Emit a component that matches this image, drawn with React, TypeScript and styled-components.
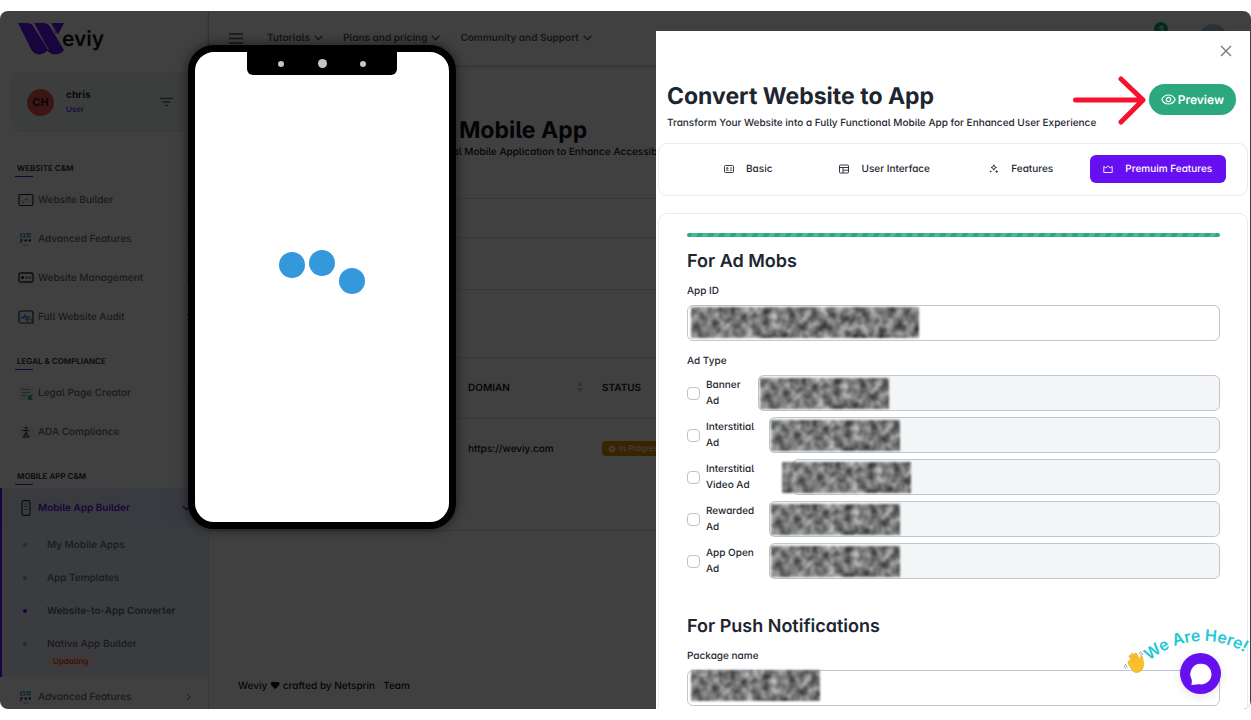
import React from "react";
import styled, { createGlobalStyle, css } from "styled-components";

const GlobalStyle = createGlobalStyle`
  *, *::before, *::after { box-sizing: border-box; }
  body {
    margin: 0;
    background: #fff;
    color: #1d2630;
    font-family: Inter, "Liberation Sans", sans-serif;
    font-size: 10px;
    line-height: 16px;
    font-weight: 500;
    font-feature-settings: "cv11", "cv05";
    text-rendering: geometricPrecision;
  }
  button, input { font: inherit; font-feature-settings: inherit; text-rendering: inherit; }
  h1, h2, h3, p, ul { margin: 0; padding: 0; }
  ul { list-style: none; }
  a { color: inherit; text-decoration: none; }
`;

const Frame = styled.div`
  position: relative;
  height: calc(100vh - 22px);
  margin: 11px 0;
  border-radius: 8px;
  overflow: hidden;
`;

/* ---------- Dashboard behind the overlay ---------- */

const Shell = styled.div`
  display: flex;
  height: 100%;
`;

const Sidebar = styled.nav`
  flex: none;
  width: 209px;
  border-right: 1px dotted #b9c2ca;
  overflow: hidden;
`;

const Brand = styled.a`
  display: flex;
  align-items: flex-start;
  height: 61px;
  padding: 12px 0 0 18px;
  color: #10101c;
  font-size: 21px;
  font-weight: 600;
  line-height: 34px;
  svg { margin-right: -3px; }
`;

const UserCard = styled.div`
  display: flex;
  align-items: center;
  height: 60px;
  margin: 0 12px;
  padding: 0 22px 0 14px;
  border: 1px solid #e4eceb;
  border-radius: 8px;
  background: #f0f6f4;
`;

const Initials = styled.span`
  width: 27px;
  height: 27px;
  margin-right: 12px;
  border-radius: 50%;
  background: #f0574f;
  color: #10101c;
  font-size: 11px;
  font-weight: 600;
  line-height: 27px;
  text-align: center;
`;

const UserText = styled.div`
  flex: 1;
  line-height: 14px;
  font-weight: 700;
`;

const Role = styled.div`
  color: #6610f2;
  font-size: 8px;
  font-weight: 500;
`;

const SectionLabel = styled.h3`
  position: relative;
  height: 17px;
  margin: 17px 0 3px;
  padding-left: 17px;
  color: #1d2630;
  font-size: 8px;
  font-weight: 600;
  line-height: 16px;
  text-transform: uppercase;
  &::after {
    content: "";
    position: absolute;
    left: 15px;
    bottom: 0;
    width: 18px;
    height: 1px;
    background: #6610f2;
  }
  ${UserCard} + & { margin-top: 28px; }
`;

const NavLink = styled.a<{ $active?: boolean }>`
  display: flex;
  align-items: center;
  gap: 4px;
  height: 39px;
  padding: 0 17px 0 18px;
  color: #5b6b79;
  ${(p) =>
    p.$active &&
    css`
      color: #6610f2;
      font-weight: 600;
      background: linear-gradient(90deg, #e9ecf8, #dbe8fa);
    `}
`;

const NavText = styled.span`
  flex: 1;
`;

const NavGroup = styled.div`
  border-left: 2px solid #6610f2;
  background: #eceffa;
  ${NavLink} { padding-left: 16px; }
`;

const SubList = styled.ul`
  padding: 1px 0 3px;
`;

const SubItem = styled.li<{ $current?: boolean }>`
  display: grid;
  grid-template-columns: 24px 1fr;
  padding: 7px 0 6px 21px;
  color: #5b6b79;
  line-height: 20px;
  font-weight: ${(p) => (p.$current ? 600 : 500)};
  &::before {
    content: "";
    width: 4px;
    height: 4px;
    margin-top: 8px;
    border-radius: 50%;
    background: ${(p) => (p.$current ? "#6610f2" : "#9aa5af")};
  }
`;

const Updating = styled.span`
  grid-column: 2;
  justify-self: start;
  padding: 0 6px;
  border-radius: 8px;
  background: #fbe3e0;
  color: #dc2626;
  font-size: 8px;
  font-weight: 500;
  line-height: 14px;
`;

const Main = styled.main`
  flex: 1;
  min-width: 0;
  display: flex;
  flex-direction: column;
`;

const TopBar = styled.header`
  display: flex;
  align-items: center;
  height: 54px;
  padding: 0 20px;
  box-shadow: 0 1px 4px rgba(0, 0, 0, 0.25);
  color: #4b5a67;
  font-weight: 600;
`;

const TopLinks = styled.div`
  display: flex;
  gap: 20px;
  margin-left: 24px;
  flex: 1;
`;

const TopLink = styled.a`
  display: flex;
  align-items: center;
  gap: 4px;
`;

const Alerts = styled.span`
  align-self: flex-start;
  width: 14px;
  height: 14px;
  margin-top: 11px;
  border-radius: 50%;
  background: #12a56f;
  color: #fff;
  font-size: 8px;
  line-height: 14px;
  text-align: center;
`;

const Avatar = styled.span`
  width: 28px;
  height: 28px;
  margin-left: 31px;
  margin-right: 4px;
  border-radius: 50%;
  background: #a9c8de;
`;

const Hero = styled.section`
  padding: 51px 29px 38px;
  border-bottom: 1px solid #dbe0e5;
  white-space: nowrap;
  overflow: hidden;
  color: #10101c;
`;

const PageTitle = styled.h1`
  font-size: 23px;
  line-height: 28px;
  font-weight: 700;
`;

const Band = styled.div<{ $height: number }>`
  height: ${(p) => p.$height}px;
  border-bottom: 1px solid #dbe0e5;
`;

const AppsTable = styled.table`
  width: 100%;
  table-layout: fixed;
  border-collapse: collapse;
  text-align: left;
  color: #10101c;
  th {
    height: 60px;
    padding: 0;
    border-bottom: 1px solid #dbe0e5;
    font-weight: 600;
  }
  td { height: 62px; padding: 0; }
`;

const HeadCell = styled.div`
  display: flex;
  justify-content: space-between;
  padding-right: 19px;
`;

const StatusBadge = styled.span`
  display: inline-flex;
  align-items: center;
  gap: 3px;
  padding: 0 6px;
  border-radius: 4px;
  background: #e58a00;
  color: #fff;
  font-size: 8px;
  font-weight: 500;
  line-height: 15px;
`;

const Footer = styled.footer`
  display: flex;
  gap: 8px;
  margin-top: auto;
  padding: 0 29px 15px;
  color: #10101c;
`;

const Dim = styled.div`
  position: absolute;
  inset: 0;
  background: rgba(0, 0, 0, 0.75);
`;

/* ---------- Phone preview ---------- */

const Phone = styled.section`
  position: absolute;
  top: 34px;
  left: 188px;
  width: 268px;
  height: 484px;
  border: 7px solid #000;
  border-radius: 26px;
  background: #fff;
  box-shadow: 0 0 12px rgba(0, 0, 0, 0.6);
`;

const Notch = styled.div`
  display: flex;
  align-items: center;
  justify-content: space-between;
  width: 150px;
  height: 23px;
  margin: 0 auto;
  padding: 0 31px;
  border-radius: 0 0 6px 6px;
  background: #000;
`;

const Lens = styled.i<{ $size: number }>`
  width: ${(p) => p.$size}px;
  height: ${(p) => p.$size}px;
  border-radius: 50%;
  background: #c8c4c4;
`;

const Loader = styled.div`
  display: flex;
  justify-content: center;
  gap: 4px;
  margin-top: 174px;
`;

const Ball = styled.i<{ $drop: number }>`
  width: 26px;
  height: 26px;
  margin-top: ${(p) => p.$drop}px;
  border-radius: 50%;
  background: #3498db;
`;

/* ---------- Drawer ---------- */

const Drawer = styled.aside`
  position: absolute;
  top: 20px;
  right: 1px;
  bottom: 0;
  width: 594px;
  display: flex;
  flex-direction: column;
  overflow: hidden;
  background: #fff;
`;

const CloseButton = styled.button`
  flex: none;
  align-self: flex-end;
  display: grid;
  place-items: center;
  width: 24px;
  height: 24px;
  margin: 8px 12px 17px;
  padding: 0;
  border: 0;
  background: none;
  color: #6f7478;
`;

const DrawerHead = styled.header`
  flex: none;
  display: flex;
  justify-content: space-between;
  align-items: flex-start;
  padding: 0 14px 12px 11px;
`;

const DrawerTitle = styled.h2`
  margin-bottom: 3px;
  font-size: 23px;
  line-height: 32px;
  font-weight: 700;
`;

const PreviewButton = styled.button`
  display: flex;
  align-items: center;
  gap: 2px;
  height: 31px;
  margin-top: 4px;
  padding: 0 12px;
  border: 0;
  border-radius: 16px;
  background: #2ca87f;
  color: #fff;
  font-size: 12px;
  font-weight: 600;
`;

const Card = styled.section`
  margin: 0 2px;
  border: 1px solid #e7eaee;
  border-radius: 9px;
`;

const Tabs = styled(Card)`
  display: flex;
  flex: none;
  margin-bottom: 17px;
  padding: 11px 21px 12px;
`;

const Tab = styled.button<{ $active?: boolean }>`
  flex: 1;
  display: flex;
  align-items: center;
  justify-content: center;
  gap: 12px;
  height: 28px;
  padding: 0;
  border: 0;
  border-radius: 6px;
  background: ${(p) => (p.$active ? "#6610f2" : "none")};
  color: ${(p) => (p.$active ? "#fff" : "#1d2630")};
  white-space: nowrap;
`;

const FormCard = styled(Card)`
  flex: none;
  padding: 19px 27px 28px 28px;
`;

const Progress = styled.div`
  height: 4px;
  border-radius: 2px;
  background: repeating-linear-gradient(115deg, #2ca87f 0 5px, #4fb795 5px 10px);
`;

const GroupTitle = styled.h3<{ $spaced?: boolean }>`
  margin-top: ${(p) => (p.$spaced ? 36 : 13)}px;
  margin-bottom: 9px;
  font-size: 18px;
  line-height: 24px;
  font-weight: 600;
`;

const FieldLabel = styled.label`
  display: block;
  margin-bottom: 6px;
`;

const AdTypeLabel = styled.p`
  margin: 12px 0 6px;
`;

const Field = styled.div`
  position: relative;
  flex: 1;
  min-width: 0;
  svg {
    position: absolute;
    top: 0;
    left: 0;
    overflow: visible;
    pointer-events: none;
  }
`;

const TextInput = styled.input`
  display: block;
  width: 100%;
  height: 36px;
  padding: 0 12px;
  border: 1px solid #bec8d0;
  border-radius: 6px;
  background: #fff;
  &:disabled { background: #f3f5f7; }
`;

const AdRows = styled.div`
  display: grid;
  gap: 6px;
`;

const AdRow = styled.div`
  display: flex;
  align-items: center;
`;

const CheckBox = styled.input`
  appearance: none;
  width: 13px;
  height: 13px;
  margin: 0 6px 0 0;
  border: 1px solid #bfc3c7;
  border-radius: 4px;
  background: #fff;
`;

const AdLabel = styled.label<{ $width: number }>`
  width: ${(p) => p.$width}px;
`;

const LabelText = styled.span`
  display: block;
  width: 49px;
`;

/* ---------- Floating pieces ---------- */

const Arrow = styled.svg`
  position: absolute;
  top: 64px;
  right: 104px;
`;

const ChatWidget = styled.div`
  position: absolute;
  right: 0;
  bottom: 12px;
  width: 130px;
  height: 64px;
`;

const Greeting = styled.svg`
  position: absolute;
  inset: 0;
  overflow: visible;
`;

const ChatButton = styled.button`
  position: absolute;
  right: 30px;
  bottom: 3px;
  display: grid;
  place-items: center;
  width: 41px;
  height: 41px;
  padding: 0;
  border: 0;
  border-radius: 50%;
  background: #6610f2;
  box-shadow: 0 2px 10px rgba(0, 0, 0, 0.12);
`;

/* ---------- Icons ---------- */

const Chevron = () => (
  <svg width="9" height="6" viewBox="0 0 9 6" fill="none" stroke="currentColor" strokeWidth="1.3">
    <path d="M0.7 0.8 4.5 4.8 8.3 0.8" />
  </svg>
);

const ChevronRight = () => (
  <svg width="5" height="8" viewBox="0 0 5 8" fill="none" stroke="currentColor" strokeWidth="1">
    <path d="M1 1 4 4 1 7" />
  </svg>
);

const Logo = () => (
  <svg width="47" height="32" viewBox="0 0 47 32" fill="#6610f2">
    <path d="M0 0H8C13 0 15 2 17 6L30 27C25 33 16 33 13 26Z" />
    <path d="M16 0H25C30 0 32 3 34 7L46 27C41 34 31 32 28 25Z" />
    <path d="M33 0H46L41 9.500C40 11.500 38 11.500 37 9.500Z" />
    <path d="M15 -1 30.500 27M32 -1 41 14" stroke="#fff" strokeWidth="0.900" fill="none" />
  </svg>
);

type GlyphName = "chart" | "grid" | "manage" | "audit" | "doc" | "person" | "phone";

const glyphs: Record<GlyphName, React.ReactNode> = {
  chart: (
    <>
      <rect x="1" y="2.500" width="14" height="11" rx="1.500" fill="none" stroke="#222b35" strokeWidth="1.2" />
      <path d="M3 8l2 1.500L7 7l3 1 3 3" fill="none" stroke="#2ca87f" strokeDasharray="1 1" />
      <path d="M5 10v1.500" stroke="#dc2626" />
      <circle cx="9" cy="7" r="0.7" fill="#3b82f6" />
    </>
  ),
  grid: (
    <>
      <rect x="2.500" y="3" width="4" height="3" fill="none" stroke="#3b82f6" />
      <path d="M8 3h5M8 5.500h5" stroke="#2ca87f" strokeWidth="1.5" />
      <path d="M2 9h3M2 11h2" stroke="#dc2626" strokeWidth="1.3" />
      <path d="M6.500 9.500h2.500M10.500 9.500h2.500" stroke="#222b35" strokeWidth="2" />
      <path d="M5 14h6" stroke="#9aa5af" />
    </>
  ),
  manage: (
    <>
      <rect x="1" y="3" width="14" height="9" rx="1.500" fill="none" stroke="#222b35" strokeWidth="1.300" />
      <circle cx="4.500" cy="7.500" r="1.500" fill="#111" />
      <path d="M7 7.500h3" stroke="#3b82f6" strokeWidth="2" />
      <path d="M10.500 7.500h3" stroke="#2ca87f" strokeWidth="2" />
      <path d="M2 12.500h3" stroke="#dc6a26" strokeWidth="1.500" />
    </>
  ),
  audit: (
    <>
      <rect x="1" y="2" width="14" height="12" rx="1.500" fill="none" stroke="#222b35" strokeWidth="1.200" />
      <path d="M3 8.500h2.500L7 6l1.500 5L10 8h2" fill="none" stroke="#3b72f6" strokeWidth="1.300" />
      <circle cx="12" cy="12" r="2" fill="#fff" stroke="#2ca87f" />
      <path d="M13.500 13.500 15.500 15.500" stroke="#2ca87f" />
    </>
  ),
  doc: (
    <>
      <rect x="1" y="1" width="14" height="14" rx="3" fill="#eaf4ef" />
      <path d="M4 4.500h8M4 7.500h8M4 10.500h5" stroke="#8fa39a" />
      <path d="M14 10l-3 3.500M11 10.500v3.500h3.500" fill="none" stroke="#12a56f" strokeWidth="1.500" />
    </>
  ),
  person: (
    <>
      <circle cx="8" cy="8" r="7.500" fill="#eef2f4" />
      <circle cx="8" cy="4" r="1.300" fill="#2f6f60" />
      <path d="M4.500 6.500h7M8 6v4M8 9l-2.500 4h5L8 9z" fill="none" stroke="#333f4a" strokeWidth="1.200" />
    </>
  ),
  phone: (
    <>
      <rect x="4" y="0.700" width="8" height="14.600" rx="1.500" fill="none" stroke="#222b35" strokeWidth="1.200" />
      <path d="M6 4h4M6 6.500h4" stroke="#6f8ff2" />
      <path d="M6 9.500h4" stroke="#e06a6a" />
    </>
  ),
};

const Glyph = ({ name }: { name: GlyphName }) => (
  <svg width="16" height="16" viewBox="0 0 16 16">{glyphs[name]}</svg>
);

const tabIcons: Record<string, React.ReactNode> = {
  Basic: (
    <>
      <rect x="0.500" y="1.500" width="9" height="7" rx="1" />
      <path d="M2 6.800c.5-1 2.200-1 2.700 0M6 4h2M6 6.200h2" />
      <circle cx="3.300" cy="4.300" r="0.800" />
    </>
  ),
  "User Interface": (
    <>
      <rect x="0.500" y="1" width="9" height="8" rx="1" />
      <path d="M0.500 3.500h9M4 3.500V9M4 6.200h5.500" />
    </>
  ),
  Features: (
    <>
      <path d="M4.800 0.800 5.600 2.700 7.500 3.500 5.600 4.300 4.800 6.200 4 4.300 2.100 3.500 4 2.700z" />
      <path d="M1.600 6.700v1.600M0.800 7.500h1.600M7.700 6.400v2.400M6.500 7.600h2.400" />
    </>
  ),
  "Premuim Features": <path d="M0.800 2.500 2.800 4 5 1.800 7.200 4 9.200 2.500V8.500H0.800z" />,
};

const TabIcon = ({ name }: { name: string }) => (
  <svg width="10" height="10" viewBox="0 0 10 10" fill="none" stroke="currentColor" strokeWidth="0.900" strokeLinejoin="round">
    {tabIcons[name]}
  </svg>
);

const Wave = () => (
  <g transform="translate(3 18)">
    <g fill="#fbbf2d" stroke="#e59b16" strokeWidth="0.500">
      <path d="M5 9.500c1-1 2-.4 2.600.3l1 1L5.200 6c-.9-1.400.9-2.600 1.900-1.300l3 4.200-2.700-5C6.600 2.400 8.600 1.400 9.500 2.800l3 4.800-1.700-4c-.6-1.500 1.200-2.300 2-.9l3.400 6.600c.3-1.200-.1-2.300.2-3.400.4-1.300 2.100-1 2.200.3.300 2.900 1.800 6 .7 9.500-1 3.600-3.500 6-6.800 5.900-3.300 0-5-3.300-8.200-8.600-.6-1-.8-2.600.7-3.500z" />
    </g>
    <path d="M15 2c1.200.6 2 1.400 2.300 2.600M16 .5c1.600.8 2.500 2 2.900 3.500M1.500 13c.2 1.500.9 2.600 2 3.500M.2 14.500c.2 1.500.8 2.500 1.800 3.300" fill="none" stroke="#8d9095" strokeWidth="0.900" />
  </g>
);

const Redaction = ({ width, x, y }: { width: number; x: number; y: number }) => (
  <svg width={width} height="31" aria-hidden="true">
    <rect x={x} y={y} width={width} height="31" filter="url(#scramble)" />
  </svg>
);

const FilterDefs = styled.svg`
  position: absolute;
`;

const ScrambleFilter = () => (
  <FilterDefs width="0" height="0">
    <filter id="scramble" x="-3%" y="-10%" width="106%" height="120%" colorInterpolationFilters="sRGB">
      <feTurbulence type="fractalNoise" baseFrequency="0.12 0.11" numOctaves="2" seed="7" />
      <feColorMatrix values="0.900 0 0 0 0.020  0.900 0 0 0 0.020  0.900 0 0 0 0.020  0 0 0 0 1" />
      <feComposite operator="in" in2="SourceAlpha" />
      <feGaussianBlur stdDeviation="1" />
    </filter>
  </FilterDefs>
);

/* ---------- Data ---------- */

const websiteLinks: [GlyphName, string][] = [
  ["chart", "Website Builder"],
  ["grid", "Advanced Features"],
  ["manage", "Website Management"],
  ["audit", "Full Website Audit"],
];

const tabs = ["Basic", "User Interface", "Features", "Premuim Features"];

const adTypes = [
  { name: "Banner Ad", labelWidth: 52, x: 2 },
  { name: "Interstitial Ad", labelWidth: 63, x: 2 },
  { name: "Interstitial Video Ad", labelWidth: 86, x: -10 },
  { name: "Rewarded Ad", labelWidth: 63, x: 2 },
  { name: "App Open Ad", labelWidth: 63, x: 2 },
];

const MenuLink = ({ icon, text, arrow }: { icon: GlyphName; text: string; arrow?: boolean }) => (
  <NavLink href="#">
    <Glyph name={icon} />
    <NavText>{text}</NavText>
    {arrow && <ChevronRight />}
  </NavLink>
);

export default function App() {
  return (
    <>
      <GlobalStyle />
      <ScrambleFilter />
      <Frame>
        <Shell>
          <Sidebar>
            <Brand href="#">
              <Logo />
              <span>eviy</span>
            </Brand>
            <UserCard>
              <Initials>CH</Initials>
              <UserText>
                chris
                <Role>User</Role>
              </UserText>
              <svg width="13" height="10" viewBox="0 0 13 10" stroke="#5b6b79" strokeWidth="1.300">
                <path d="M0 1.500h13M2.500 5h8M5 8.500h3" />
              </svg>
            </UserCard>
            <SectionLabel>Website C&amp;M</SectionLabel>
            {websiteLinks.map(([icon, text]) => (
              <MenuLink key={text} icon={icon} text={text} arrow />
            ))}
            <SectionLabel>Legal &amp; Compliance</SectionLabel>
            <MenuLink icon="doc" text="Legal Page Creator" arrow />
            <MenuLink icon="person" text="ADA Compliance" />
            <SectionLabel>Mobile App C&amp;M</SectionLabel>
            <NavGroup>
              <NavLink href="#" $active>
                <Glyph name="phone" />
                <NavText>Mobile App Builder</NavText>
                <Chevron />
              </NavLink>
              <SubList>
                <SubItem><a href="#">My Mobile Apps</a></SubItem>
                <SubItem><a href="#">App Templates</a></SubItem>
                <SubItem $current><a href="#">Website-to-App Converter</a></SubItem>
                <SubItem>
                  <a href="#">Native App Builder</a>
                  <Updating>Updating</Updating>
                </SubItem>
              </SubList>
            </NavGroup>
            <MenuLink icon="grid" text="Advanced Features" arrow />
          </Sidebar>
          <Main>
            <TopBar>
              <svg width="14" height="11" viewBox="0 0 14 11" stroke="#4b5a67" strokeWidth="1.300">
                <path d="M0 1h14M0 5.500h14M0 10h14" />
              </svg>
              <TopLinks>
                <TopLink href="#">Tutorials <Chevron /></TopLink>
                <TopLink href="#">Plans and pricing <Chevron /></TopLink>
                <TopLink href="#">Community and Support <Chevron /></TopLink>
              </TopLinks>
              <Alerts>3</Alerts>
              <Avatar />
            </TopBar>
            <Hero>
              <PageTitle>Convert Website to Mobile App</PageTitle>
              <p>Transform Your Website into a Fully Functional Mobile Application to Enhance Accessibility</p>
            </Hero>
            <Band $height={39} />
            <Band $height={52} />
            <Band $height={68} />
            <AppsTable>
              <colgroup>
                <col width="259" />
                <col width="134" />
                <col />
              </colgroup>
              <thead>
                <tr>
                  <th />
                  <th>
                    <HeadCell>
                      DOMIAN
                      <svg width="6" height="14" viewBox="0 0 6 14" fill="#c3cad1">
                        <path d="M3 1 6 6H0zM3 13 0 8h6z" />
                      </svg>
                    </HeadCell>
                  </th>
                  <th>STATUS</th>
                </tr>
              </thead>
              <tbody>
                <tr>
                  <td />
                  <td>https://weviy.com</td>
                  <td>
                    <StatusBadge>
                      <svg width="8" height="8" viewBox="0 0 8 8" fill="none" stroke="#fff">
                        <circle cx="4" cy="4" r="2" strokeWidth="1.500" />
                        <circle cx="4" cy="4" r="3.300" strokeDasharray="1.300 1.300" />
                      </svg>
                      In Progress
                    </StatusBadge>
                  </td>
                </tr>
              </tbody>
            </AppsTable>
            <Band $height={51} />
            <Footer>
              <span>Weviy ♥ crafted by Netsprin</span>
              <a href="#">Team</a>
            </Footer>
          </Main>
        </Shell>
        <Dim />

        <Phone aria-label="App preview">
          <Notch>
            <Lens $size={6} />
            <Lens $size={9} />
            <Lens $size={6} />
          </Notch>
          <Loader>
            <Ball $drop={3} />
            <Ball $drop={1} />
            <Ball $drop={19} />
          </Loader>
        </Phone>

        <Drawer>
          <CloseButton aria-label="Close">
            <svg width="12" height="12" viewBox="0 0 12 12" stroke="currentColor" strokeWidth="1.300">
              <path d="M1 1 11 11M11 1 1 11" />
            </svg>
          </CloseButton>
          <DrawerHead>
            <div>
              <DrawerTitle>Convert Website to App</DrawerTitle>
              <p>Transform Your Website into a Fully Functional Mobile App for Enhanced User Experience</p>
            </div>
            <PreviewButton>
              <svg width="15" height="11" viewBox="0 0 15 11" fill="none" stroke="currentColor" strokeWidth="1.200">
                <path d="M0.800 5.500C3.500-.5 11.500-.5 14.200 5.500 11.500 11.500 3.500 11.500.8 5.500z" />
                <circle cx="7.500" cy="5.500" r="2.200" />
              </svg>
              Preview
            </PreviewButton>
          </DrawerHead>
          <Tabs>
            {tabs.map((name, i) => (
              <Tab key={name} $active={i === 3}>
                <TabIcon name={name} />
                {name}
              </Tab>
            ))}
          </Tabs>
          <FormCard>
            <Progress />
            <GroupTitle>For Ad Mobs</GroupTitle>
            <FieldLabel htmlFor="app-id">App ID</FieldLabel>
            <Field>
              <TextInput id="app-id" />
              <Redaction width={228} x={4} y={2} />
            </Field>
            <AdTypeLabel>Ad Type</AdTypeLabel>
            <AdRows>
              {adTypes.map((ad, i) => (
                <AdRow key={ad.name}>
                  <CheckBox type="checkbox" id={`ad-${i}`} />
                  <AdLabel htmlFor={`ad-${i}`} $width={ad.labelWidth}>
                    <LabelText>{ad.name}</LabelText>
                  </AdLabel>
                  <Field>
                    <TextInput disabled aria-label={`${ad.name} ID`} />
                    <Redaction width={129} x={ad.x} y={3} />
                  </Field>
                </AdRow>
              ))}
            </AdRows>
            <GroupTitle $spaced>For Push Notifications</GroupTitle>
            <FieldLabel htmlFor="package">Package name</FieldLabel>
            <Field>
              <TextInput id="package" />
              <Redaction width={129} x={4} y={0} />
            </Field>
          </FormCard>
        </Drawer>

        <Arrow width="74" height="50" viewBox="0 0 74 50" fill="none" stroke="#f5112f" strokeWidth="5" strokeLinecap="round" strokeLinejoin="round">
          <path d="M2.500 25H69M48 4 70 25 48 47" />
        </Arrow>

        <ChatWidget>
          <Greeting width="130" height="76" viewBox="0 0 130 76">
            <path id="greeting-arc" d="M0 90A82 82 0 0 1 164 90" fill="none" />
            <text fill="#1fc8d6" fontSize="16" fontWeight="600">
              <textPath href="#greeting-arc" startOffset="70">We Are Here!</textPath>
            </text>
            <Wave />
          </Greeting>
          <ChatButton aria-label="Open chat">
            <svg width="22" height="22" viewBox="0 0 22 22" fill="#fff">
              <path d="M11 .8a10.300 10.300 0 1 1-1.200 20.500C8 21.200 5.500 21.800 1.200 22c.8-2 .8-4 .3-6A10.300 10.300 0 0 1 11 .8z" />
            </svg>
          </ChatButton>
        </ChatWidget>
      </Frame>
    </>
  );
}
